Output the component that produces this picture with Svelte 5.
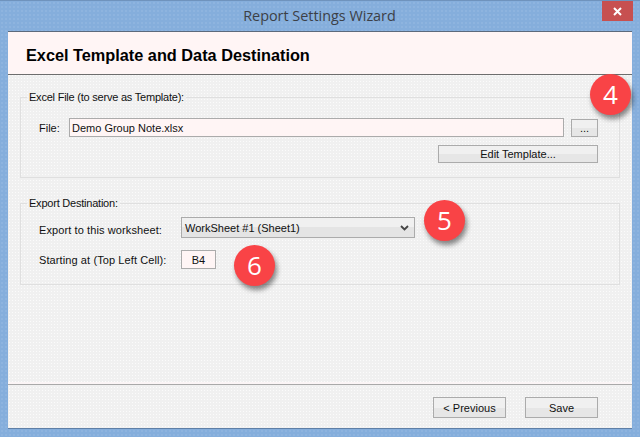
<script>
  let file = 'Demo Group Note.xlsx';
  let cell = 'B4';
  // numbered callouts laid over the dialog
  const badges = [
    { n: 4, x: 590, y: 73 },
    { n: 5, x: 424, y: 199 },
    { n: 6, x: 234, y: 244 }
  ];
</script>

<div class="window">
  <div class="titlebar">
    <span class="title">Report Settings Wizard</span>
    <div class="close">
      <svg width="9" height="9" viewBox="0 0 9 9"><path d="M1 1 L8 8 M8 1 L1 8" stroke="#fff" stroke-width="2" /></svg>
    </div>
  </div>

  <div class="client">
    <div class="header">Excel Template and Data Destination</div>

    <div class="body">
      <fieldset class="group first">
        <legend>Excel File (to serve as Template):</legend>
        <div class="row file-row">
          <span class="file-label">File:</span>
          <input class="text file" value={file} />
          <button class="dots">...</button>
        </div>
        <div class="row right">
          <button class="edit">Edit Template...</button>
        </div>
      </fieldset>

      <fieldset class="group second">
        <legend>Export Destination:</legend>
        <div class="row sheet-row">
          <span class="label low">Export to this worksheet:</span>
          <div class="select">
            <span>WorkSheet #1 (Sheet1)</span>
            <svg width="9" height="6" viewBox="0 0 9 6"><path d="M1 1 L4.5 4.5 L8 1" fill="none" stroke="#444" stroke-width="1.8" /></svg>
          </div>
        </div>
        <div class="row cell-row">
          <span class="label">Starting at (Top Left Cell):</span>
          <input class="text cell" value={cell} />
        </div>
      </fieldset>
    </div>

    <div class="footer">
      <button class="nav">&lt; Previous</button>
      <button class="nav">Save</button>
    </div>
  </div>

  {#each badges as b}
    <div class="badge" style:left="{b.x}px" style:top="{b.y}px">{b.n}</div>
  {/each}
</div>

<style>
  :global(body) {
    margin: 0;
  }
  .window {
    position: relative;
    width: 640px;
    height: 437px;
    box-sizing: border-box;
    padding: 0 8px 8px 8px;
    background-color: #85aedc;
    background-image: radial-gradient(circle, rgba(255, 255, 255, 0.16) 0.6px, transparent 0.8px);
    background-size: 4px 4px;
    border-top: 1px solid #6f93bd;
    display: flex;
    flex-direction: column;
    font-family: "Liberation Sans", Arial, sans-serif;
    font-size: 11px;
    color: #111;
    overflow: hidden;
  }
  .titlebar {
    height: 30px;
    flex: none;
    display: flex;
    align-items: center;
    justify-content: center;
    position: relative;
  }
  .title {
    font-family: "Open Sans", sans-serif;
    font-size: 14.4px;
    color: #3c4046;
    margin-top: -1px;
    margin-left: -1px;
  }
  .close {
    position: absolute;
    right: -1px;
    top: 0;
    width: 31px;
    height: 20px;
    background: #c75050;
    display: flex;
    align-items: center;
    justify-content: center;
  }
  .client {
    flex: 1;
    display: flex;
    flex-direction: column;
    background-color: #f0f0f0;
    background-image: radial-gradient(circle, rgba(255, 255, 255, 0.7) 0.6px, transparent 0.8px);
    background-size: 3px 3px;
    border-top: 1px solid #5c6a7c;
    border-bottom: 1px solid #5f7fa6;
  }
  .header {
    height: 43px;
    flex: none;
    box-sizing: border-box;
    padding-left: 18px;
    padding-top: 14px;
    background: #fff5f5;
    border-bottom: 1px solid #6d6d6d;
    font-size: 16.3px;
    line-height: 18px;
    font-weight: bold;
    color: #000;
  }
  .body {
    flex: 1;
    padding: 16px 12px 0 12px;
    display: flex;
    flex-direction: column;
    gap: 19px;
  }
  fieldset.group {
    margin: 0;
    padding: 0;
    border: 1px solid #dfdfdf;
    position: relative;
    box-sizing: border-box;
    height: 87px;
  }
  fieldset.group.second {
    height: 88px;
  }
  legend {
    margin-left: 6px;
    padding: 0 2px;
    font-size: 11px;
    line-height: 13px;
    letter-spacing: -0.22px;
  }
  .row {
    display: flex;
    align-items: center;
  }
  .file-row {
    margin-top: 14px;
    padding-left: 18px;
    padding-right: 21px;
  }
  .file-label {
    width: 30px;
  }
  .text {
    box-sizing: border-box;
    height: 19px;
    border: 1px solid #ababab;
    background: #fff5f5;
    font: 11px "Liberation Sans", Arial, sans-serif;
    color: #111;
    padding: 0 2px;
    outline: none;
  }
  .file {
    width: 495px;
  }
  button {
    box-sizing: border-box;
    border: 1px solid #ababab;
    background: linear-gradient(#f0f0f0 50%, #e6e6e6 50%);
    font: 11px "Liberation Sans", Arial, sans-serif;
    color: #111;
    padding: 0;
  }
  .dots {
    width: 27px;
    height: 18px;
    margin-left: 7px;
  }
  .right {
    justify-content: flex-end;
    margin-top: 8px;
    padding-right: 21px;
  }
  .edit {
    width: 160px;
    height: 18px;
  }
  .label {
    width: 142px;
    padding-left: 18px;
    letter-spacing: 0.1px;
  }
  .label.low {
    padding-top: 4px;
  }
  .sheet-row {
    margin-top: 7px;
  }
  .select {
    box-sizing: border-box;
    width: 234px;
    height: 21px;
    border: 1px solid #ababab;
    background: linear-gradient(#f0f0f0 50%, #e4e4e4 50%);
    display: flex;
    align-items: center;
    justify-content: space-between;
    padding: 0 5px 0 3px;
  }
  .cell-row {
    margin-top: 12px;
  }
  .cell {
    width: 35px;
    text-align: center;
  }
  .footer {
    height: 44px;
    flex: none;
    box-sizing: border-box;
    border-top: 1px solid #a9a9a9;
    box-shadow: 0 -2px 0 #fbf5f6;
    display: flex;
    justify-content: flex-end;
    gap: 19px;
    padding: 12px 34px 0 0;
  }
  .nav {
    width: 73px;
    height: 21px;
  }
  .badge {
    position: absolute;
    width: 41px;
    height: 41px;
    border-radius: 50%;
    background: #f94346;
    color: #fff;
    font-family: "Open Sans", sans-serif;
    font-size: 26px;
    line-height: 41px;
    text-align: center;
    box-shadow: 2px 4px 5px rgba(0, 0, 0, 0.45);
  }
</style>
